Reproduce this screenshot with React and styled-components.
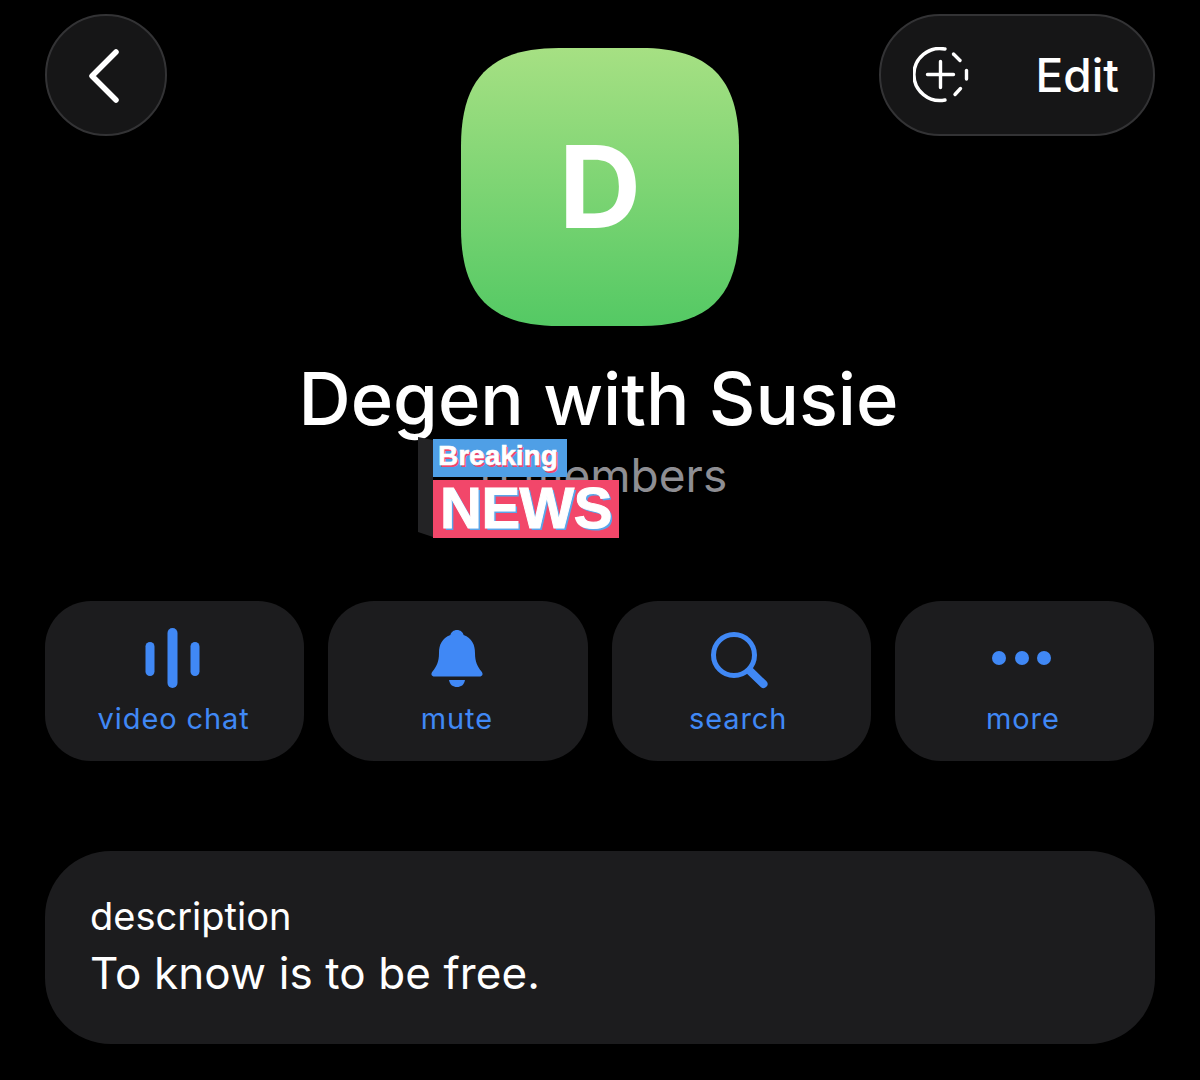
import React from "react";
import styled, { createGlobalStyle } from "styled-components";

const Global = createGlobalStyle`
  html, body { margin: 0; padding: 0; background: #000; }
  body { font-family: Inter, "Liberation Sans", sans-serif; color: #fff; -webkit-font-smoothing: antialiased; }
`;

const Page = styled.div`
  width: 1200px;
  height: 1080px;
  box-sizing: border-box;
  padding: 14px 45px 0;
  background: #000;
  overflow: hidden;
`;
const TopRow = styled.header`
  display: grid;
  grid-template-columns: 1fr auto 1fr;
  align-items: start;
`;
const GlassButton = styled.button`
  height: 122px;
  width: ${(p) => p.$w}px;
  justify-self: ${(p) => (p.$between ? "end" : "start")};
  box-sizing: border-box;
  border: 2px solid #333335;
  border-radius: 61px;
  background: #161617;
  color: #fff;
  display: flex;
  align-items: center;
  justify-content: ${(p) => (p.$between ? "space-between" : "center")};
  padding: ${(p) => (p.$between ? "0 34px 0 32px" : "0 5px 0 0")};
  font: 500 46px Inter, sans-serif;
`;
const Avatar = styled.div`
  width: 278px;
  height: 278px;
  margin-top: 34px;
  clip-path: path("M98 0 H180 C248 0 278 30 278 98 V180 C278 248 248 278 180 278 H98 C30 278 0 248 0 180 V98 C0 30 30 0 98 0 Z");
  background: linear-gradient(180deg, #a6e083 0%, #54c964 100%);
  display: flex;
  align-items: center;
  justify-content: center;
  font: 700 114px/1 Inter, sans-serif;
  color: #fff;
`;
const Title = styled.h1`
  margin: 29px 0 0;
  padding-right: 3px;
  text-align: center;
  font: 500 72.3px/88px Inter, sans-serif;
`;
const Subtitle = styled.div`
  position: relative;
  margin-top: 5px;
  text-align: center;
  font: 400 46px/54px Inter, sans-serif;
  color: #8e8e93;
`;
const Sticker = styled.div`
  position: absolute;
  left: 373px;
  top: -11px;
  width: 201px;
  height: 100px;
  text-align: left;
`;
const StickerSide = styled.div`
  position: absolute;
  left: 0;
  top: 0;
  width: 15px;
  height: 100px;
  background: #232325;
  clip-path: polygon(0 0, 100% 3%, 100% 100%, 0 95%);
`;
const BreakingTag = styled.div`
  position: absolute;
  left: 15px;
  top: 2px;
  width: 134px;
  height: 38px;
  background: #4f9fe6;
  color: #fff;
  font: 700 28px/34px "Liberation Sans", Arial, sans-serif;
  padding-left: 5px;
  box-sizing: border-box;
  -webkit-text-stroke: 0.6px #fff;
  text-shadow: 1.5px 1.5px 0 #f0466b;
`;
const NewsTag = styled.div`
  position: absolute;
  left: 15px;
  top: 43px;
  width: 186px;
  height: 58px;
  background: #f2476a;
  color: #fff;
  font: 700 58px/55px "Liberation Sans", Arial, sans-serif;
  padding-left: 7px;
  box-sizing: border-box;
  letter-spacing: -0.5px;
  -webkit-text-stroke: 1px #fff;
  text-shadow: 2px 2px 0 #5aa5ea;
`;
const Actions = styled.nav`
  display: grid;
  grid-template-columns: repeat(4, 259.25px);
  column-gap: 24px;
  margin-top: 99px;
`;
const Action = styled.button`
  height: 160px;
  border: none;
  border-radius: 46px;
  background: #1c1c1e;
  color: #4088f5;
  display: flex;
  flex-direction: column;
  align-items: center;
  padding: 0 ${(p) => p.$nudge || 0}px 0 0;
  font: 400 29px/36px Inter, sans-serif;
  letter-spacing: 0.9px;
`;
const IconSlot = styled.span`
  display: block;
  width: 70px;
  height: 64px;
  margin-top: 26px;
  margin-bottom: 10px;
`;
const Card = styled.section`
  margin-top: 90px;
  height: 193px;
  box-sizing: border-box;
  border-radius: 66px;
  background: #1c1c1e;
  padding: 42px 45px 0;
`;
const CardLabel = styled.div`
  font: 400 38px/46px Inter, sans-serif;
`;
const CardValue = styled.div`
  margin-top: 7px;
  font: 400 44px/54px Inter, sans-serif;
  letter-spacing: 0.1px;
`;

const Back = () => (
  <svg width="40" height="60" viewBox="0 0 40 60" fill="none">
    <path d="M32 7 L8 31 L32 55" stroke="#fff" strokeWidth="5.5" strokeLinecap="round" strokeLinejoin="round" />
  </svg>
);
const AddStory = () => (
  <svg width="56" height="56" viewBox="0 0 56 56" fill="none" stroke="#fff" strokeWidth="3.4" strokeLinecap="round">
    <path d="M32 2 A26 26 0 1 0 32 53" />
    <path d="M40.500 7 L47 13.500" />
    <path d="M53.500 23.500 L53.500 32" />
    <path d="M47.500 41.500 L42 47.500" />
    <path d="M14.500 27.500 H40.500 M27.500 14.500 V40.500" />
  </svg>
);
const Bars = () => (
  <svg width="70" height="64" viewBox="0 0 70 64" fill="#4088f5">
    <rect x="6.500" y="15" width="9" height="34" rx="4.500" />
    <rect x="28.500" y="1" width="10" height="60" rx="5" />
    <rect x="51.500" y="15" width="9" height="34" rx="4.500" />
  </svg>
);
const Bell = () => (
  <svg width="70" height="64" viewBox="0 0 70 64" fill="#4088f5">
    <path d="M35 3 c3.400 0 6 2.200 6.600 5 C50 11 53 18 53 26 c0 9 2.500 13.500 6.500 18.500 c2 2.500 1 5 -2 5 H12.500 c-3 0 -4 -2.500 -2 -5 c4 -5 6.500 -9.500 6.500 -18.500 C17 18 20 11 28.400 8 C29 5.200 31.600 3 35 3 Z" />
    <path d="M27 53 H43 C42 58 39 60 35 60 C31 60 28 58 27 53 Z" />
  </svg>
);
const Search = () => (
  <svg width="70" height="64" viewBox="0 0 70 64" fill="none" stroke="#4088f5" strokeLinecap="round">
    <circle cx="31" cy="28" r="20.500" strokeWidth="5" />
    <path d="M47 44 L60.500 57" strokeWidth="8" />
  </svg>
);
const Dots = () => (
  <svg width="70" height="64" viewBox="0 0 70 64" fill="#4088f5">
    <circle cx="11" cy="31" r="7" />
    <circle cx="34" cy="31" r="7" />
    <circle cx="56" cy="31" r="7" />
  </svg>
);

const actions = [
  ["video chat", Bars, 2],
  ["mute", Bell, 2],
  ["search", Search, 6],
  ["more", Dots, 3],
];

export default function App() {
  return (
    <Page>
      <Global />
      <TopRow>
        <GlassButton $w={122} aria-label="back"><Back /></GlassButton>
        <Avatar>D</Avatar>
        <GlassButton $w={276} $between><AddStory /><span>Edit</span></GlassButton>
      </TopRow>
      <Title>Degen with Susie</Title>
      <Subtitle>
        11 members
        <Sticker>
          <StickerSide />
          <BreakingTag>Breaking</BreakingTag>
          <NewsTag>NEWS</NewsTag>
        </Sticker>
      </Subtitle>
      <Actions>
        {actions.map(([label, Icon, nudge]) => (
          <Action key={label} $nudge={nudge}>
            <IconSlot><Icon /></IconSlot>
            {label}
          </Action>
        ))}
      </Actions>
      <Card>
        <CardLabel>description</CardLabel>
        <CardValue>To know is to be free.</CardValue>
      </Card>
    </Page>
  );
}
